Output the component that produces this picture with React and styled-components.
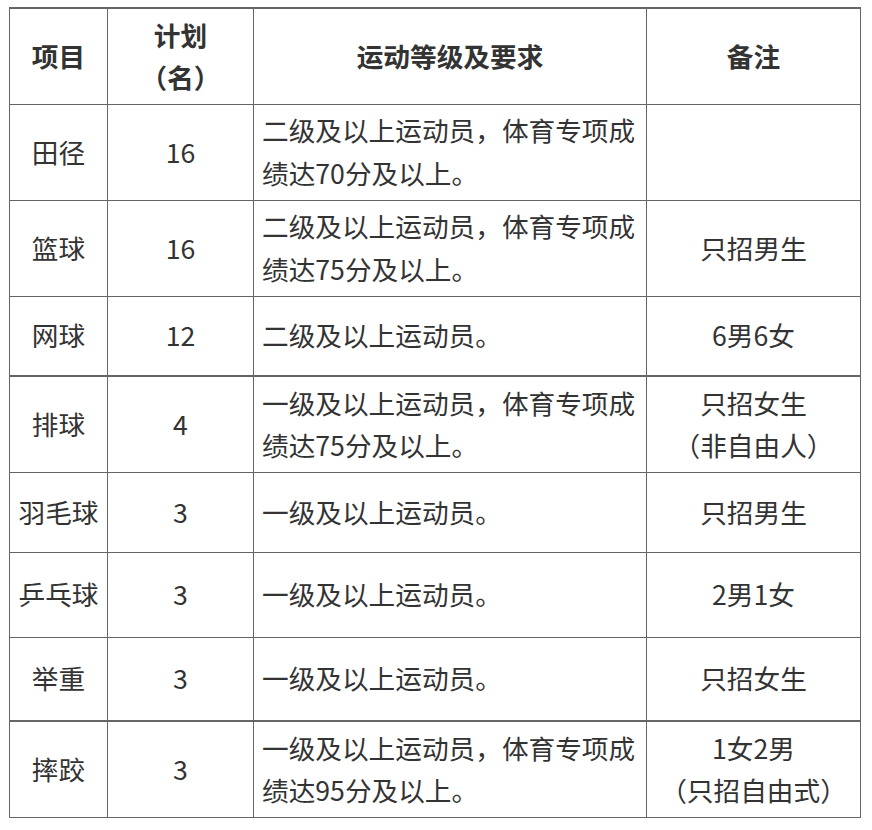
import React from "react";
import styled, { createGlobalStyle } from "styled-components";

const GlobalStyle = createGlobalStyle`
  body {
    margin: 0;
    background: #fff;
    font-family: "Noto Sans CJK SC", "Noto Sans", sans-serif;
    color: #333;
  }
`;

const Page = styled.div`
  padding: 7px 0 0 9px;
`;

const Table = styled.table`
  width: 851px;
  border-collapse: collapse;
  table-layout: fixed;
  border-top: 2px solid #666;
  font-size: 26.67px;
  line-height: 1.6;
`;

const Row = styled.tr`
  height: ${(p) => p.$h}px;
  border-top: ${(p) => (p.$thick ? "2px" : "1px")} solid #666;
`;

const HeadCell = styled.th`
  border: 1px solid #666;
  padding: 4px 8px;
  font-weight: 700;
  text-align: center;
  vertical-align: middle;
`;

const Cell = styled.td`
  border: 1px solid #666;
  padding: 4px 8px;
  text-align: ${(p) => (p.$left ? "left" : "center")};
  vertical-align: middle;
  font-weight: 400;
`;

const rows = [
  { name: "田径", plan: "16", req: "二级及以上运动员，体育专项成绩达70分及以上。", note: "", h: 96 },
  { name: "篮球", plan: "16", req: "二级及以上运动员，体育专项成绩达75分及以上。", note: "只招男生", h: 96 },
  { name: "网球", plan: "12", req: "二级及以上运动员。", note: "6男6女", h: 80 },
  { name: "排球", plan: "4", req: "一级及以上运动员，体育专项成绩达75分及以上。", note: ["只招女生", "（非自由人）"], h: 96, thick: true },
  { name: "羽毛球", plan: "3", req: "一级及以上运动员。", note: "只招男生", h: 80 },
  { name: "乒乓球", plan: "3", req: "一级及以上运动员。", note: "2男1女", h: 85 },
  { name: "举重", plan: "3", req: "一级及以上运动员。", note: "只招女生", h: 84 },
  { name: "摔跤", plan: "3", req: "一级及以上运动员，体育专项成绩达95分及以上。", note: ["1女2男", "（只招自由式）"], h: 96, thick: true },
];

export default function App() {
  return (
    <Page>
      <GlobalStyle />
      <Table>
        <colgroup>
          <col style={{ width: 98 }} />
          <col style={{ width: 146 }} />
          <col style={{ width: 393 }} />
          <col style={{ width: 214 }} />
        </colgroup>
        <tbody>
          <Row $h={96}>
            <HeadCell>项目</HeadCell>
            <HeadCell>
              计划
              <br />
              （名）
            </HeadCell>
            <HeadCell>运动等级及要求</HeadCell>
            <HeadCell>备注</HeadCell>
          </Row>
          {rows.map((r) => (
            <Row key={r.name} $h={r.h} $thick={r.thick}>
              <Cell>{r.name}</Cell>
              <Cell>{r.plan}</Cell>
              <Cell $left>{r.req}</Cell>
              <Cell>
                {Array.isArray(r.note)
                  ? r.note.map((n, i) => (
                      <React.Fragment key={i}>
                        {i > 0 && <br />}
                        {n}
                      </React.Fragment>
                    ))
                  : r.note}
              </Cell>
            </Row>
          ))}
        </tbody>
      </Table>
    </Page>
  );
}
